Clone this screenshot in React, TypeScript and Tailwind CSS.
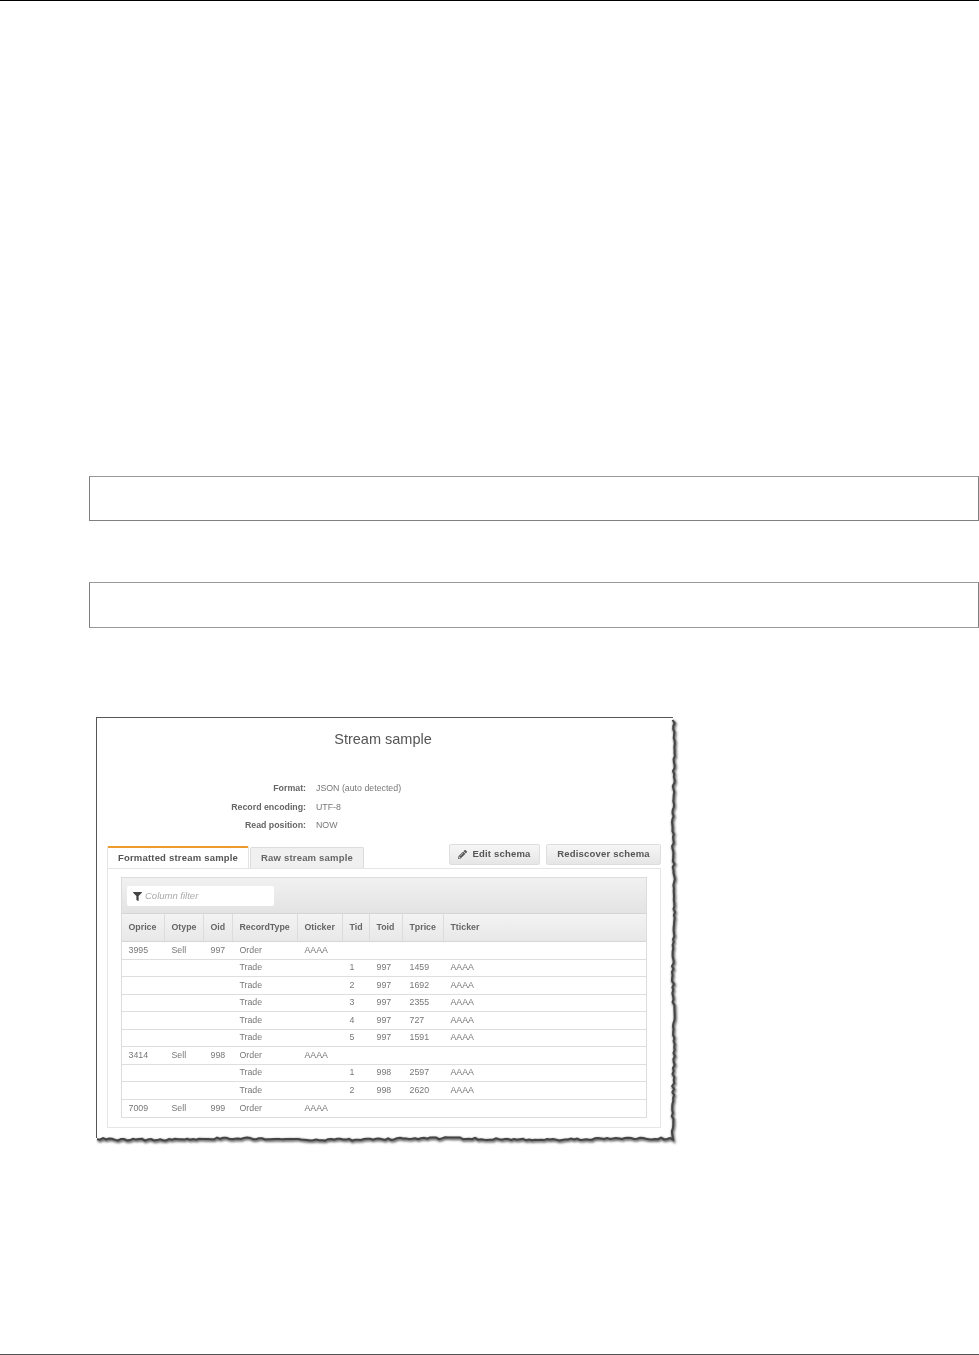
import { useMemo } from 'react'
import { FaFilter, FaPencilAlt } from 'react-icons/fa'

const gridCols = 'grid grid-cols-[43px_39px_29px_65px_45px_27px_33px_41px_1fr]'

const columns = ['Oprice', 'Otype', 'Oid', 'RecordType', 'Oticker', 'Tid', 'Toid', 'Tprice', 'Tticker']

const rows = [
  ['3995', 'Sell', '997', 'Order', 'AAAA', '', '', '', ''],
  ['', '', '', 'Trade', '', '1', '997', '1459', 'AAAA'],
  ['', '', '', 'Trade', '', '2', '997', '1692', 'AAAA'],
  ['', '', '', 'Trade', '', '3', '997', '2355', 'AAAA'],
  ['', '', '', 'Trade', '', '4', '997', '727', 'AAAA'],
  ['', '', '', 'Trade', '', '5', '997', '1591', 'AAAA'],
  ['3414', 'Sell', '998', 'Order', 'AAAA', '', '', '', ''],
  ['', '', '', 'Trade', '', '1', '998', '2597', 'AAAA'],
  ['', '', '', 'Trade', '', '2', '998', '2620', 'AAAA'],
  ['7009', 'Sell', '999', 'Order', 'AAAA', '', '', '', ''],
]

const meta = [
  ['Format:', 'JSON (auto detected)'],
  ['Record encoding:', 'UTF-8'],
  ['Read position:', 'NOW'],
]

// wobbly line for the torn screenshot edge
function tornEdge() {
  let seed = 7
  const rand = () => {
    seed = (seed * 16807) % 2147483647
    return seed / 2147483647 - 0.5
  }
  const pts: string[] = []
  for (let y = 3; y < 419; y += 3) {
    pts.push(`${(577.5 + rand() * 2.2 + Math.sin(y / 23) * 0.7).toFixed(1)},${y}`)
  }
  for (let x = 577; x > 0; x -= 3) {
    pts.push(`${x},${(422 + rand() * 2 + Math.sin(x / 31) * 0.8).toFixed(1)}`)
  }
  return pts.join(' ')
}

function TornFrame() {
  const points = useMemo(tornEdge, [])
  return (
    <svg className="absolute left-0 top-0" width="590" height="432" viewBox="0 0 590 432" fill="none">
      <defs>
        <filter id="edge-shadow" x="-5%" y="-5%" width="110%" height="110%">
          <feGaussianBlur stdDeviation="1" />
        </filter>
        <filter id="edge-soft" x="-5%" y="-5%" width="110%" height="110%">
          <feGaussianBlur stdDeviation="0.4" />
        </filter>
      </defs>
      <polyline points={points} transform="translate(0.8 1.2)" stroke="#666" strokeWidth="3" filter="url(#edge-shadow)" />
      <polyline points={points} stroke="#444" strokeWidth="2" filter="url(#edge-soft)" />
    </svg>
  )
}

function StreamSample() {
  return (
    <div className="relative ml-[96px] mt-[89px] h-[425px] w-[580px]">
      <TornFrame />
      <div className="h-[421px] w-[577px] border-l border-t border-[#555] pl-[10px]">
        <div className="blur-[0.4px]">
          <h2 className="pr-[14px] pt-[12px] text-center text-[14.5px] leading-[18px] text-[#555]">Stream sample</h2>

          <div className="mt-[33px] flex flex-col gap-[3.5px] text-[8.8px] leading-[15px]">
            {meta.map(([label, value]) => (
              <div key={label} className="flex">
                <div className="w-[199px] text-right font-bold text-[#666]">{label}</div>
                <div className="ml-[10px] text-[#777]">{value}</div>
              </div>
            ))}
          </div>

          {/* tabs and buttons */}
          <div className="mt-[13px] flex h-[22px] w-[554px] items-end">
            <div className="flex h-[22px] w-[142px] items-center justify-center rounded-t-[2px] border-x border-t-2 border-[#e3e3e3] border-t-[#ec9a2c] bg-white text-[9.5px] font-bold tracking-[0.2px] text-[#555]">
              Formatted stream sample
            </div>
            <div className="ml-[1px] flex h-[21px] w-[114px] items-center justify-center rounded-t-[2px] border border-b-0 border-[#dcdcdc] bg-[#f0f0f0] text-[9.5px] font-bold tracking-[0.2px] text-[#666]">
              Raw stream sample
            </div>
            <div className="mb-[3px] ml-auto flex h-[21px] gap-[6px]">
              <button className="flex w-[91px] items-center justify-center gap-[5px] rounded-[2px] border border-[#dedede] bg-gradient-to-b from-[#f6f6f6] to-[#e6e6e6] text-[9.5px] font-bold tracking-[0.2px] text-[#555]">
                <FaPencilAlt className="h-[9px] w-[9px] text-[#555]" />
                Edit schema
              </button>
              <button className="w-[115px] rounded-[2px] border border-[#dedede] bg-gradient-to-b from-[#f6f6f6] to-[#e6e6e6] text-[9.5px] font-bold tracking-[0.2px] text-[#555]">
                Rediscover schema
              </button>
            </div>
          </div>

          {/* sample panel */}
          <div className="h-[260px] w-[554px] border border-[#e6e6e6] px-[13px] pt-[8px]">
            <div className="border border-[#dcdcdc]">
              <div className="flex h-[36px] items-center border-b border-[#d5d5d5] bg-gradient-to-b from-[#f1f1f1] to-[#e3e3e3] pl-[5px] pt-[1px]">
                <div className="flex h-[20px] w-[147px] items-center gap-[3px] rounded-[2px] bg-white pl-[6px] text-[9.5px] italic text-[#aaa]">
                  <FaFilter className="h-[9px] w-[9px] text-[#444]" />
                  Column filter
                </div>
              </div>
              <div className={`${gridCols} h-[28px] border-b border-[#d5d5d5] bg-gradient-to-b from-[#f3f3f3] to-[#e8e8e8] text-[8.8px] font-bold text-[#666]`}>
                {columns.map((col) => (
                  <div key={col} className="flex items-center border-r border-[#dcdcdc] pl-[6.5px] last:border-r-0">
                    {col}
                  </div>
                ))}
              </div>
              {rows.map((row, i) => (
                <div key={i} className={`${gridCols} h-[17.5px] border-b border-[#dedede] text-[8.8px] text-[#777] last:border-b-0`}>
                  {row.map((cell, j) => (
                    <div key={j} className="flex items-center pl-[6.5px]">
                      {cell}
                    </div>
                  ))}
                </div>
              ))}
            </div>
          </div>
        </div>
      </div>
    </div>
  )
}

export default function App() {
  return (
    <div className="flex h-[1355px] w-[979px] flex-col border-b border-t border-b-[#555] border-t-black bg-white font-['Liberation_Sans',Arial,sans-serif]">
      <div className="ml-[89px] mt-[475px] h-[45px] w-[890px] border border-[#999] border-b-[#808080] border-l-[#808080] border-r-[#808080]" />
      <div className="ml-[89px] mt-[61px] h-[46px] w-[890px] border border-[#999] border-l-[#808080] border-r-[#808080]" />
      <StreamSample />
    </div>
  )
}
